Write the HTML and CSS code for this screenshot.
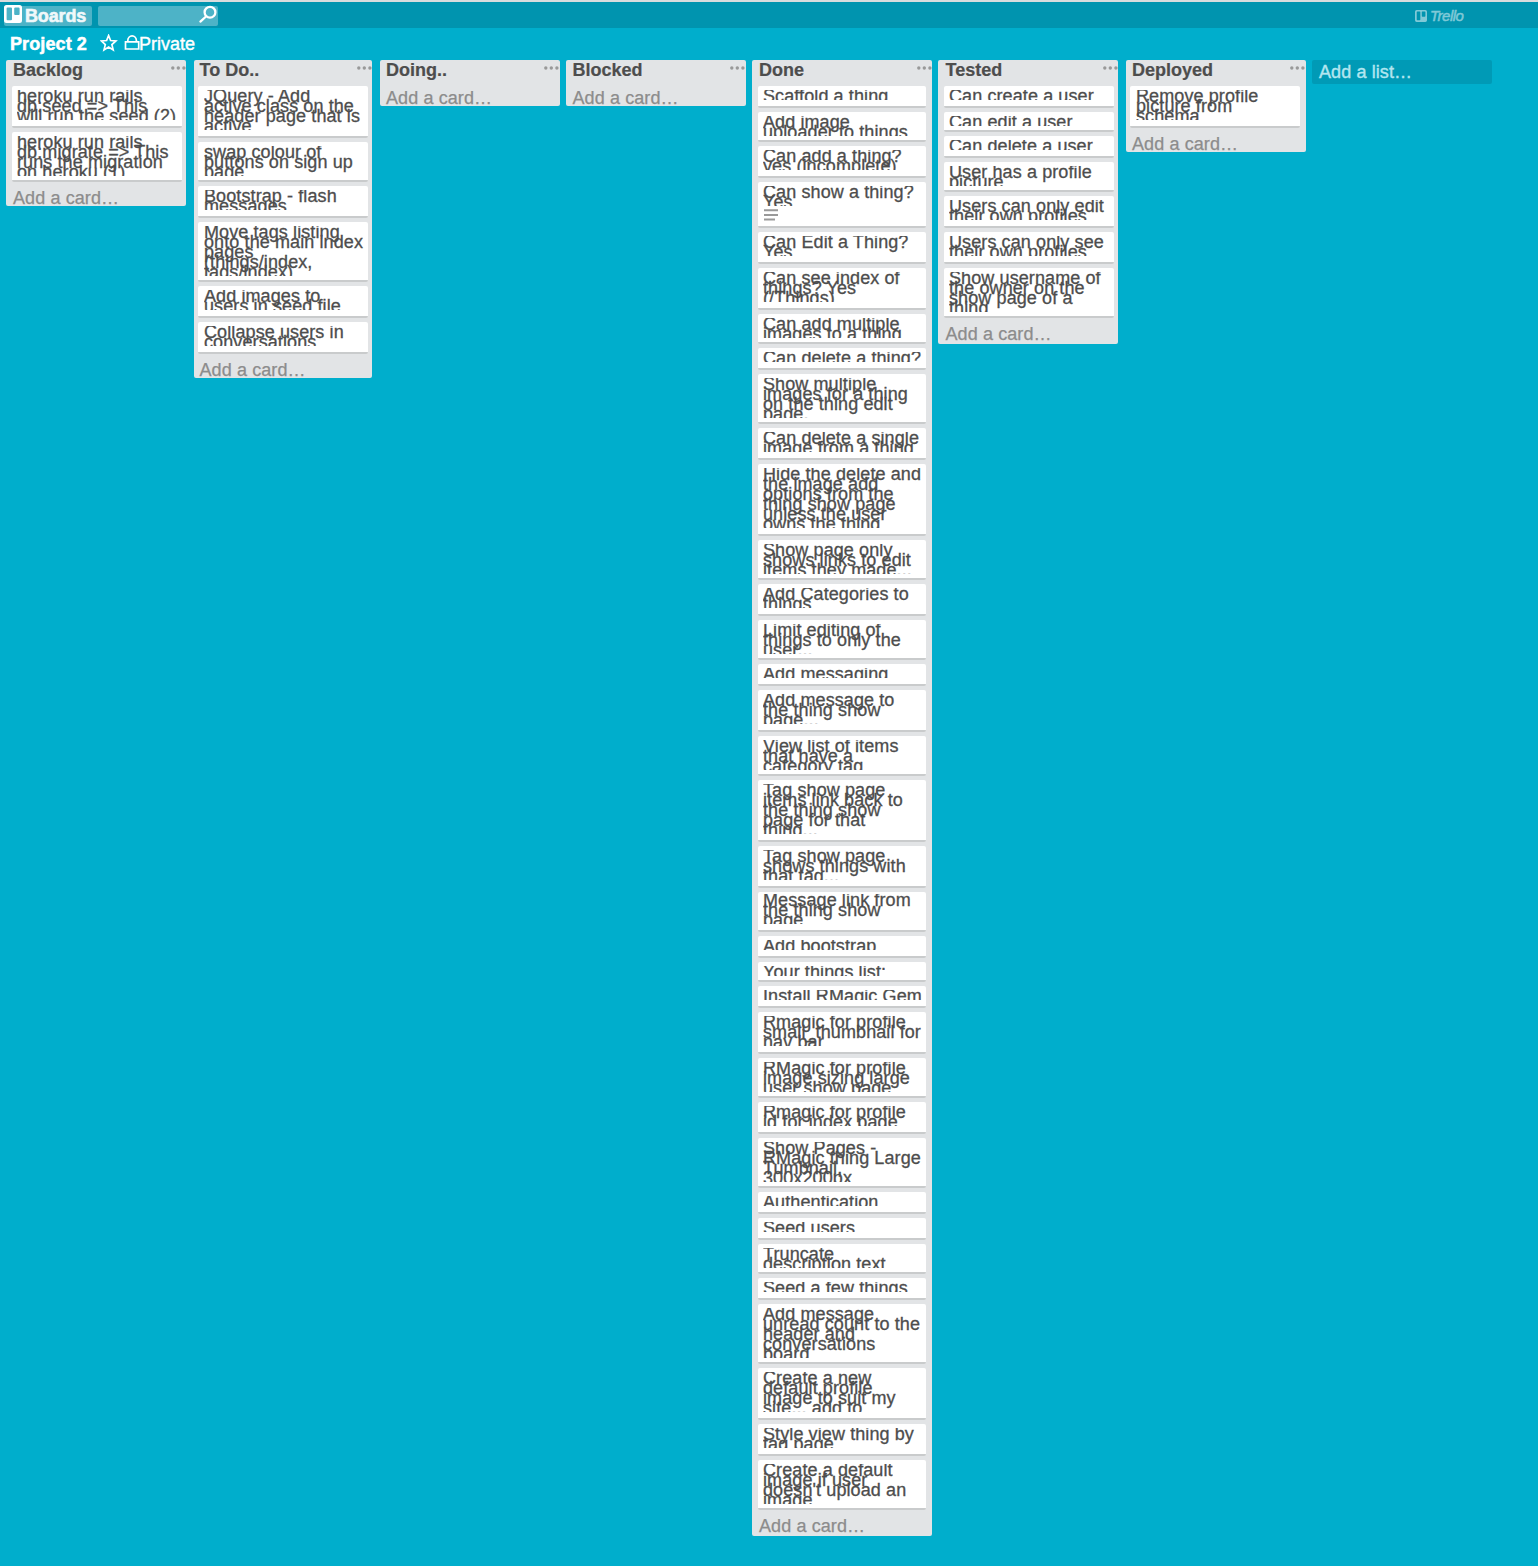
FILE: index.html
```html
<!DOCTYPE html>
<html lang="en">
<head>
<meta charset="utf-8">
<title>Project 2 | Trello</title>
<link rel="stylesheet" href="styles.css">
</head>
<body>
<svg class="defs" width="0" height="0" aria-hidden="true">
  <symbol id="dots" viewBox="0 0 15 4"><circle cx="1.8" cy="2" r="1.7"/><circle cx="7.3" cy="2" r="1.7"/><circle cx="12.9" cy="2" r="1.7"/></symbol>
  <symbol id="logo" viewBox="0 0 18 18"><path fill-rule="evenodd" d="M2.5 0h13A2.5 2.5 0 0 1 18 2.500v13a2.500 2.500 0 0 1-2.500 2.500h-13A2.500 2.500 0 0 1 0 15.500v-13A2.500 2.500 0 0 1 2.500 0zM3.600 2.400q-1 0-1 1v10.800q0 1 1 1h3.400q1 0 1-1V3.400q0-1-1-1zM11.200 2.400q-1 0-1 1v5.600q0 1 1 1h3.400q1 0 1-1V3.400q0-1-1-1z"/></symbol>
</svg>
<header class="topbar">
  <a class="boards"><svg class="boards-icon"><use href="#logo"/></svg>Boards</a>
  <div class="search"><svg viewBox="0 0 20 20"><circle cx="12" cy="7.200" r="5.400"/><path d="M8 11.500 2.400 16.600"/></svg></div>
  <div class="brand"><svg><use href="#logo"/></svg><span>Trello</span></div>
</header>
<div class="board-head">
  <h1>Project 2</h1>
  <svg class="star" viewBox="0 0 18 18"><path d="M8.600 1.500l2 5 5.300.4-4 3.700 1.300 5.300-4.600-2.800L4 15.900l1.300-5.300-4-3.700 5.300-.4z"/></svg>
  <svg class="lock" viewBox="0 0 16 16"><path d="M1.500 7.800h13.200v7.200H1.500zM3.800 7.800V6.600a4.300 4.800 0 0 1 8.600 0v1.200"/></svg>
  <span>Private</span>
</div>
<main class="board">
  <section class="list backlog">
    <h2>Backlog<svg><use href="#dots"/></svg></h2>
    <div class="cards">
      <article class="card"><p>heroku run rails<br>db:seed =&gt; This<br>will run the seed (2)</p></article>
      <article class="card snug"><p>heroku run rails<br>db:migrate =&gt; This<br>runs the migration<br>on heroku (1)</p></article>
    </div>
    <a class="add">Add a card…</a>
  </section>
  <section class="list todo">
    <h2>To Do..<svg><use href="#dots"/></svg></h2>
    <div class="cards">
      <article class="card"><p>JQuery - Add<br>active class on the<br>header page that is<br>active</p></article>
      <article class="card snug"><p>swap colour of<br>buttons on sign up<br>page</p></article>
      <article class="card"><p>Bootstrap - flash<br>messages</p></article>
      <article class="card snug"><p>Move tags listing<br>onto the main index<br>pages<br>(things/index,<br>tags/index)</p></article>
      <article class="card"><p>Add images to<br>users in seed file</p></article>
      <article class="card"><p>Collapse users in<br>conversations</p></article>
    </div>
    <a class="add">Add a card…</a>
  </section>
  <section class="list doing">
    <h2>Doing..<svg><use href="#dots"/></svg></h2>
    <a class="add">Add a card…</a>
  </section>
  <section class="list blocked">
    <h2>Blocked<svg><use href="#dots"/></svg></h2>
    <a class="add">Add a card…</a>
  </section>
  <section class="list done">
    <h2>Done<svg><use href="#dots"/></svg></h2>
    <div class="cards">
      <article class="card"><p>Scaffold a thing</p></article>
      <article class="card snug"><p>Add image<br>uploader to things</p></article>
      <article class="card"><p>Can add a thing?<br>yes (incomplete)</p></article>
      <article class="card with-badge"><p>Can show a thing?<br>Yes</p><svg class="desc" viewBox="0 0 14 12"><path d="M0 1.200h14M0 5.900h14M0 10.600h11"/></svg></article>
      <article class="card"><p>Can Edit a Thing?<br>Yes</p></article>
      <article class="card"><p>Can see index of<br>things? Yes<br>(/Things)</p></article>
      <article class="card snug"><p>Can add multiple<br>images to a thing</p></article>
      <article class="card"><p>Can delete a thing?</p></article>
      <article class="card snug"><p>Show multiple<br>images for a thing<br>on the thing edit<br>page.</p></article>
      <article class="card"><p>Can delete a single<br>image from a thing</p></article>
      <article class="card"><p>Hide the delete and<br>the image add<br>options from the<br>thing show page<br>unless the user<br>owns the thing</p></article>
      <article class="card snug"><p>Show page only<br>shows links to edit<br>items they made...</p></article>
      <article class="card"><p>Add Categories to<br>things</p></article>
      <article class="card snug"><p>Limit editing of<br>things to only the<br>user...</p></article>
      <article class="card"><p>Add messaging</p></article>
      <article class="card"><p>Add message to<br>the thing show<br>page...</p></article>
      <article class="card snug"><p>View list of items<br>that have a<br>category tag</p></article>
      <article class="card"><p>Tag show page<br>items link back to<br>the thing show<br>page for that<br>thing...</p></article>
      <article class="card"><p>Tag show page<br>shows things with<br>that tag...</p></article>
      <article class="card raised"><p>Message link from<br>the thing show<br>page</p></article>
      <article class="card"><p>Add bootstrap</p></article>
      <article class="card snug"><p>Your things list:</p></article>
      <article class="card"><p>Install RMagic Gem</p></article>
      <article class="card"><p>Rmagic for profile<br>small_thumbnail for<br>nav bar</p></article>
      <article class="card snug"><p>RMagic for profile<br>image sizing large<br>user show page</p></article>
      <article class="card"><p>Rmagic for profile<br>id for index page</p></article>
      <article class="card snug"><p>Show Pages -<br>RMagic thing Large<br>Tumbnail,<br>300x200px</p></article>
      <article class="card"><p>Authentication</p></article>
      <article class="card"><p>Seed users</p></article>
      <article class="card snug"><p>Truncate<br>description text</p></article>
      <article class="card"><p>Seed a few things</p></article>
      <article class="card snug"><p>Add message<br>unread count to the<br>header and<br>conversations<br>board</p></article>
      <article class="card"><p>Create a new<br>default profile<br>image to suit my<br>site... add to</p></article>
      <article class="card"><p>Style view thing by<br>tag page</p></article>
      <article class="card snug"><p>Create a default<br>image if user<br>doesn't upload an<br>image</p></article>
    </div>
    <a class="add">Add a card…</a>
  </section>
  <section class="list tested">
    <h2>Tested<svg><use href="#dots"/></svg></h2>
    <div class="cards">
      <article class="card"><p>Can create a user</p></article>
      <article class="card snug"><p>Can edit a user</p></article>
      <article class="card"><p>Can delete a user</p></article>
      <article class="card snug"><p>User has a profile<br>picture</p></article>
      <article class="card"><p>Users can only edit<br>their own profiles</p></article>
      <article class="card"><p>Users can only see<br>their own profiles</p></article>
      <article class="card snug"><p>Show username of<br>the owner on the<br>show page of a<br>thing</p></article>
    </div>
    <a class="add">Add a card…</a>
  </section>
  <section class="list deployed">
    <h2>Deployed<svg><use href="#dots"/></svg></h2>
    <div class="cards">
      <article class="card"><p>Remove profile<br>picture from<br>schema</p></article>
    </div>
    <a class="add">Add a card…</a>
  </section>
  <a class="add-list">Add a list…</a>
</main>
</body>
</html>
```
FILE: styles.css
```css
* { box-sizing: border-box; }
body {
  margin: 0;
  min-height: 1566px;
  background: #00aecc;
  color: #4d4d4d;
  font: 18px/20px "Liberation Sans", Arial, sans-serif;
}
h1, h2, p { margin: 0; font-size: 18px; }
svg { display: block; flex: none; }
.defs { position: absolute; }

.topbar {
  display: flex;
  align-items: flex-start;
  height: 28px;
  padding: 4px 73px 0 4px;
  border-top: 2px solid #d9dcdd;
  background: #0094af;
  color: #fff;
}
.boards {
  display: flex;
  width: 88px;
  height: 20px;
  border-radius: 2px;
  background: #4db3c7;
  color: #f0f8fa;
  font-weight: bold;
  letter-spacing: -0.15px;
  -webkit-text-stroke: 0.6px;
}
.boards-icon { width: 18px; height: 18px; margin: -1px 3px 0 0; fill: #fff; }
.search {
  display: flex;
  justify-content: flex-end;
  width: 120px;
  height: 20px;
  margin-left: 6px;
  border-radius: 2px;
  background: #4db3c7;
}
.search svg { width: 20px; height: 20px; margin-top: -1px; fill: none; stroke: #fff; stroke-width: 2.3; stroke-linecap: round; }
.brand { display: flex; gap: 3px; margin: 4px 0 0 auto; color: #80c9d7; }
.brand svg { width: 12px; height: 12px; fill: #80c9d7; }
.brand span { width: 35px; font: italic 15px/12px "Liberation Sans Narrow", "Liberation Sans", sans-serif; letter-spacing: -0.5px; -webkit-text-stroke: 0.5px; }

.board-head {
  display: flex;
  align-items: flex-start;
  height: 32px;
  padding: 6px 10px 0;
  color: #fff;
}
.board-head h1 { width: 90px; letter-spacing: 0.1px; -webkit-text-stroke: 0.5px; }
.board-head svg { fill: none; stroke: #fff; stroke-width: 1.7; }
.star { width: 18px; height: 18px; }
.lock { width: 16px; height: 16px; margin-left: 6px; }
.board-head span { margin-left: -1px; -webkit-text-stroke: 0.4px; }

.board { display: flex; align-items: flex-start; gap: 6px; padding-left: 6px; }
.list {
  --title-x: 7px;
  --text-x: 5px;
  --foot: 24px;
  flex: none;
  width: 180px;
  border-radius: 2px;
  background: #e2e4e6;
}
.list h2 {
  display: flex;
  justify-content: space-between;
  height: 22px;
  padding-left: var(--title-x);
  -webkit-text-stroke: 0.2px;
}
.list h2 svg { width: 15px; height: 4px; margin-top: 6px; fill: #999; stroke: none; }
.cards { display: flex; flex-direction: column; gap: 4px; padding: 4px 4px 0 6px; }
.card {
  padding: 4px 0 6px var(--text-x);
  border-bottom: 2px solid #c9cbcc;
  border-radius: 2px;
  background: #fff;
}
.card.snug { padding-bottom: 4px; }
.card.raised { padding-top: 2px; }
.card p {
  margin-bottom: -1px;
  padding-top: 1px;
  clip-path: inset(0 0 1px 0);
  line-height: 10px;
  letter-spacing: 0.1px;
  white-space: nowrap;
  -webkit-text-stroke: 0.3px;
}
.desc { width: 14px; height: 12px; margin: 3px 0 -1px 1px; fill: none; stroke: #999; stroke-width: 2; }
.add {
  display: block;
  height: var(--foot);
  padding: 6px 0 0 var(--title-x);
  color: #8c8c8c;
  letter-spacing: 0.1px;
  -webkit-text-stroke: 0.25px;
}

.todo { --title-x: 5.5px; --text-x: 6px; width: 178px; margin: 0 2px; }
.todo .cards { padding-left: 4px; }
.doing, .blocked { --title-x: 6px; }
.blocked { --title-x: 6.5px; }
.doing h2 svg, .blocked h2 svg, .deployed h2 svg { margin-right: 1px; }
.done { --foot: 26px; }
.done .cards { padding-right: 6px; }
.tested { --title-x: 7.5px; --foot: 26px; }
.deployed { --title-x: 6px; --text-x: 6px; margin-left: 2px; }
.deployed .cards { padding: 4px 6px 0 4px; }

.add-list {
  width: 180px;
  height: 24px;
  padding: 2px 0 0 7px;
  border-radius: 2px;
  background: #009ab6;
  color: #b3e6f0;
  letter-spacing: 0.1px;
  -webkit-text-stroke: 0.4px;
}
```
